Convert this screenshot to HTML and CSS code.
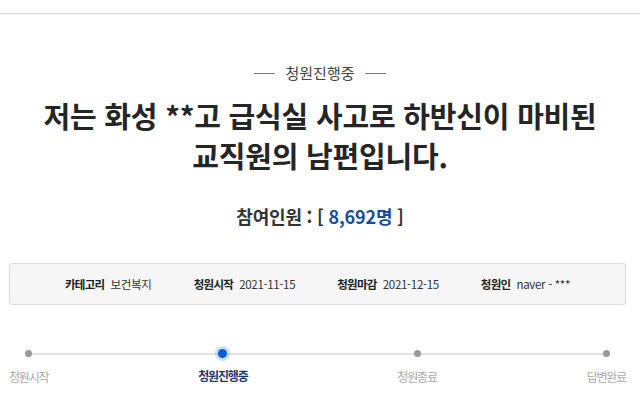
FILE: index.html
```html
<!DOCTYPE html>
<html lang="ko">
<head>
<meta charset="utf-8">
<link rel="stylesheet" href="styles.css">
</head>
<body>
<div class="topbar"></div>
<main class="petition">
  <div class="status"><span class="dash"></span><span class="status-text">청원진행중</span><span class="dash"></span></div>
  <h1 class="title">저는 화성 **고 급식실 사고로 하반신이 마비된<br>교직원의 남편입니다.</h1>
  <div class="count">참여인원 : [ <span class="num">8,692명</span> ]</div>
  <div class="info">
    <div class="item"><b>카테고리</b><span>보건복지</span></div>
    <div class="item"><b>청원시작</b><span>2021-11-15</span></div>
    <div class="item"><b>청원마감</b><span>2021-12-15</span></div>
    <div class="item"><b>청원인</b><span>naver - ***</span></div>
  </div>
  <div class="steps">
    <div class="track"></div>
    <div class="step"><i class="dot"></i><span>청원시작</span></div>
    <div class="step active"><i class="dot"></i><span>청원진행중</span></div>
    <div class="step"><i class="dot"></i><span>청원종료</span></div>
    <div class="step"><i class="dot"></i><span>답변완료</span></div>
  </div>
</main>
</body>
</html>
```
FILE: styles.css
```css
html, body { margin: 0; padding: 0; background: #fff; }
body { font-family: "Noto Sans CJK KR", "Noto Sans", sans-serif; color: #222; width: 640px; height: 411px; overflow: hidden; }
.topbar { height: 13px; border-bottom: 1px solid #dedede; box-shadow: 0 1px 0 #f4f4f4; }
.petition { display: flex; flex-direction: column; align-items: center; }
.status { margin-top: 49px; display: flex; align-items: center; gap: 10px; height: 20px; }
.dash { width: 21px; height: 1px; background: #777; }
.status-text { font-size: 15px; color: #444; line-height: 20px; }
.title { margin: 12px 0 0; font-size: 29px; font-weight: 700; line-height: 40px; text-align: center; color: #252525; letter-spacing: -0.2px; }
.count { margin-top: 29px; font-size: 18px; font-weight: 700; color: #333; line-height: 24px; letter-spacing: -0.2px; }
.count .num { color: #1a4c9c; }
.info { margin-top: 35px; align-self: stretch; margin-left: 9px; margin-right: 14px; height: 40px; background: #f6f6f6; border: 1px solid #dcdcdc; border-radius: 3px; display: flex; justify-content: center; align-items: center; gap: 42px; font-size: 11.5px; color: #333; }
.item { display: flex; gap: 6px; }
.item b { font-weight: 700; color: #222; letter-spacing: -0.7px; }
.item span { letter-spacing: -0.3px; }
.steps { position: relative; align-self: stretch; margin: 43px 14px 0 9px; display: flex; justify-content: space-between; }
.track { position: absolute; left: 19px; right: 20px; top: 5px; height: 2px; background: #e2e2e2; }
.step { position: relative; display: flex; flex-direction: column; align-items: center; gap: 11px; }
.dot { display: block; width: 7px; height: 7px; border-radius: 50%; background: #999; margin-top: 2px; }
.step span { font-size: 12px; color: #aaa; line-height: 18px; letter-spacing: -1.2px; }
.step.active .dot { width: 9px; height: 9px; margin-top: 1px; background: #0a5fcf; box-shadow: 0 0 0 3px rgba(80, 150, 240, 0.3); margin-bottom: -2px; }
.step.active span { color: #1d3a6e; font-weight: 700; }
```
